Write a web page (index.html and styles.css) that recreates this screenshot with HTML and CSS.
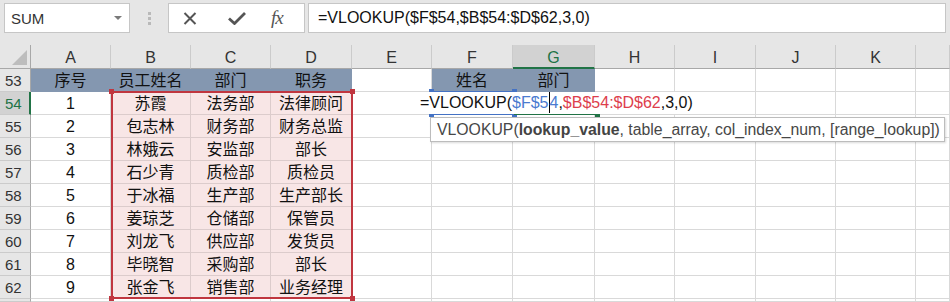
FILE: index.html
```html
<!DOCTYPE html>
<html lang="zh-CN">
<head>
    <meta charset="UTF-8">
    <title>VLOOKUP</title>
    <link rel="stylesheet" href="styles.css">
</head>
<body>
    <div class="toolbar">
        <div class="namebox"><span>SUM</span><i class="caret"></i></div>
        <div class="grip"><i></i><i></i><i></i></div>
        <div class="fxbox">
            <svg class="ic-x" width="14" height="13" viewBox="0 0 14 13"><path d="M1.5 1 L12.5 12 M12.5 1 L1.5 12" stroke="#555" stroke-width="2" fill="none"/></svg>
            <svg class="ic-ok" width="18" height="14" viewBox="0 0 18 14"><path d="M1 7.5 L6.5 12.5 L17 2" stroke="#555" stroke-width="2.8" fill="none"/></svg>
            <span class="fx">fx</span>
        </div>
        <div class="formula">=VLOOKUP($F$54,$B$54:$D$62,3,0)</div>
    </div>

    <div class="sheet">
        <div class="corner"><i></i></div>
        <div class="ch">A</div><div class="ch">B</div><div class="ch">C</div><div class="ch">D</div>
        <div class="ch">E</div><div class="ch">F</div><div class="ch on">G</div><div class="ch">H</div>
        <div class="ch">I</div><div class="ch">J</div><div class="ch">K</div><div class="ch"></div>

        <div class="rh">53</div>
        <div class="c hd">序号</div><div class="c hd">员工姓名</div><div class="c hd">部门</div><div class="c hd">职务</div>
        <div class="c"></div><div class="c hd">姓名</div><div class="c hd">部门</div>
        <div class="c"></div><div class="c"></div><div class="c"></div><div class="c"></div><div class="c"></div>

        <div class="rh on">54</div>
        <div class="c">1</div><div class="c pk">苏霞</div><div class="c pk">法务部</div><div class="c pk">法律顾问</div>
        <div class="c"></div><div class="c"></div><div class="c"></div>
        <div class="c"></div><div class="c"></div><div class="c"></div><div class="c"></div><div class="c"></div>

        <div class="rh">55</div>
        <div class="c">2</div><div class="c pk">包志林</div><div class="c pk">财务部</div><div class="c pk">财务总监</div>
        <div class="c"></div><div class="c"></div><div class="c"></div>
        <div class="c"></div><div class="c"></div><div class="c"></div><div class="c"></div><div class="c"></div>

        <div class="rh">56</div>
        <div class="c">3</div><div class="c pk">林娥云</div><div class="c pk">安监部</div><div class="c pk">部长</div>
        <div class="c"></div><div class="c"></div><div class="c"></div>
        <div class="c"></div><div class="c"></div><div class="c"></div><div class="c"></div><div class="c"></div>

        <div class="rh">57</div>
        <div class="c">4</div><div class="c pk">石少青</div><div class="c pk">质检部</div><div class="c pk">质检员</div>
        <div class="c"></div><div class="c"></div><div class="c"></div>
        <div class="c"></div><div class="c"></div><div class="c"></div><div class="c"></div><div class="c"></div>

        <div class="rh">58</div>
        <div class="c">5</div><div class="c pk">于冰福</div><div class="c pk">生产部</div><div class="c pk">生产部长</div>
        <div class="c"></div><div class="c"></div><div class="c"></div>
        <div class="c"></div><div class="c"></div><div class="c"></div><div class="c"></div><div class="c"></div>

        <div class="rh">59</div>
        <div class="c">6</div><div class="c pk">姜琼芝</div><div class="c pk">仓储部</div><div class="c pk">保管员</div>
        <div class="c"></div><div class="c"></div><div class="c"></div>
        <div class="c"></div><div class="c"></div><div class="c"></div><div class="c"></div><div class="c"></div>

        <div class="rh">60</div>
        <div class="c">7</div><div class="c pk">刘龙飞</div><div class="c pk">供应部</div><div class="c pk">发货员</div>
        <div class="c"></div><div class="c"></div><div class="c"></div>
        <div class="c"></div><div class="c"></div><div class="c"></div><div class="c"></div><div class="c"></div>

        <div class="rh">61</div>
        <div class="c">8</div><div class="c pk">毕晓智</div><div class="c pk">采购部</div><div class="c pk">部长</div>
        <div class="c"></div><div class="c"></div><div class="c"></div>
        <div class="c"></div><div class="c"></div><div class="c"></div><div class="c"></div><div class="c"></div>

        <div class="rh">62</div>
        <div class="c">9</div><div class="c pk">张金飞</div><div class="c pk">销售部</div><div class="c pk">业务经理</div>
        <div class="c"></div><div class="c"></div><div class="c"></div>
        <div class="c"></div><div class="c"></div><div class="c"></div><div class="c"></div><div class="c"></div>

        <div class="rh"></div>
        <div class="c"></div><div class="c"></div><div class="c"></div><div class="c"></div>
        <div class="c"></div><div class="c"></div><div class="c"></div>
        <div class="c"></div><div class="c"></div><div class="c"></div><div class="c"></div><div class="c"></div>

        <!-- reference highlights while editing G54 -->
        <div class="ref ref-red"><b class="tl"></b><b class="tr"></b><b class="bl"></b><b class="br"></b></div>
        <div class="ref ref-blue"><b class="tl"></b><b class="tr"></b><b class="bl"></b><b class="br"></b></div>
        <div class="active"><b class="br"></b></div>

        <div class="editor">=VLOOKUP(<span class="blue">$F$5</span><span class="caret-line"></span><span class="blue">4</span>,<span class="red">$B$54:$D$62</span>,3,0)</div>

        <div class="tip">VLOOKUP(<b>lookup_value</b>, table_array, col_index_num, [range_lookup])</div>
    </div>
</body>
</html>
```

FILE: styles.css
```css
body { margin: 0; width: 950px; height: 302px; overflow: hidden; background: #fff; font-family: "Liberation Sans", "Noto Sans CJK SC", sans-serif; }

.toolbar { height: 45px; background: #e6e6e6; display: flex; align-items: flex-start; padding: 3px 4px 0 4px; box-sizing: border-box; }
.namebox { width: 126px; height: 30px; box-sizing: border-box; background: #fff; border: 1px solid #c6c6c6; display: flex; align-items: center; justify-content: space-between; padding: 0 7px 0 6px; font-size: 15px; color: #333; }
.caret { width: 0; height: 0; border-left: 4px solid transparent; border-right: 4px solid transparent; border-top: 4px solid #7a7a7a; }
.grip { width: 38px; height: 30px; display: flex; flex-direction: column; align-items: center; justify-content: center; gap: 2px; }
.grip i { width: 3px; height: 3px; background: #b9b9b9; }
.fxbox { width: 137px; height: 30px; box-sizing: border-box; background: #fff; border: 1px solid #c6c6c6; display: flex; align-items: center; padding-left: 14px; }
.ic-ok { margin-left: 31px; }
.fx { margin-left: 25px; font-family: "Liberation Serif", serif; font-style: italic; font-size: 19px; color: #555; letter-spacing: -1px; }
.formula { flex: 1; height: 30px; margin-left: 3px; box-sizing: border-box; background: #fff; border: 1px solid #c6c6c6; padding-left: 9px; font-size: 16px; line-height: 28px; color: #111; }

.sheet { position: relative; display: grid; grid-template-columns: 31px 80px 80px 80px 81px 80px 81px 82px 80px 81px 80px 80px 1fr; grid-template-rows: 24px repeat(10, 23px) 3px; }

.corner { background: #e6e6e6; border-right: 1px solid #a8a8a8; border-bottom: 1px solid #a8a8a8; position: relative; }
.corner i { position: absolute; right: 3px; bottom: 3px; width: 0; height: 0; border-left: 15px solid transparent; border-bottom: 15px solid #bdbdbd; }
.ch { background: #e6e6e6; border-right: 1px solid #cbcbcb; border-bottom: 1px solid #a8a8a8; text-align: center; font-size: 16px; line-height: 25px; color: #333; }
.ch.on { background: #d2d2d2; border-bottom: 2px solid #217346; color: #217346; }

.rh { background: #e6e6e6; border-right: 1px solid #a8a8a8; border-bottom: 1px solid #cbcbcb; font-size: 15px; line-height: 23px; color: #333; padding-left: 5px; }
.rh.on { background: #d2d2d2; border-right: 2px solid #217346; color: #217346; }

.c { border-right: 1px solid #d9d9d9; border-bottom: 1px solid #d9d9d9; text-align: center; font-size: 16px; line-height: 23px; color: #111; white-space: nowrap; overflow: hidden; }
.c.hd { background: #8497b0; border-color: #8497b0; }
.c.pk { background: #f8e6e6; border-color: #dccccc; }

.ref { position: absolute; box-sizing: border-box; border: 2px solid; }
.ref b { position: absolute; width: 5px; height: 5px; }
.ref .tl { left: -4px; top: -4px; }
.ref .tr { right: -4px; top: -4px; }
.ref .bl { left: -4px; bottom: -4px; }
.ref .br { right: -4px; bottom: -4px; }
.ref-red { left: 111px; top: 46px; width: 242px; height: 208px; border-color: #c0363f; }
.ref-red b { background: #c0363f; }
.ref-blue { left: 431px; top: 46px; width: 84px; height: 24px; border-color: #4472c4; }
.ref-blue b { background: #4472c4; }
.active { position: absolute; left: 514px; top: 46px; width: 83px; height: 24px; box-sizing: border-box; border-bottom: 2px solid #217346; }
.active b { position: absolute; right: -3px; bottom: -4px; width: 5px; height: 5px; background: #217346; }

.editor { position: absolute; left: 419px; top: 47px; width: 278px; height: 22px; background: #fff; font-size: 16px; line-height: 22px; color: #111; padding-left: 1px; white-space: nowrap; box-sizing: border-box; }
.editor .blue { color: #4a7bd0; }
.editor .red { color: #dd3e4c; }
.caret-line { display: inline-block; width: 1px; height: 21px; background: #000; vertical-align: top; }

.tip { position: absolute; left: 430px; top: 72px; width: 515px; height: 25px; box-sizing: border-box; background: #fff; border: 1px solid #bcbcbc; box-shadow: 1px 1px 2px rgba(0,0,0,0.15); font-size: 15.8px; line-height: 23px; color: #474747; padding-left: 6px; white-space: nowrap; }
.tip b { font-weight: bold; color: #444; }
```
